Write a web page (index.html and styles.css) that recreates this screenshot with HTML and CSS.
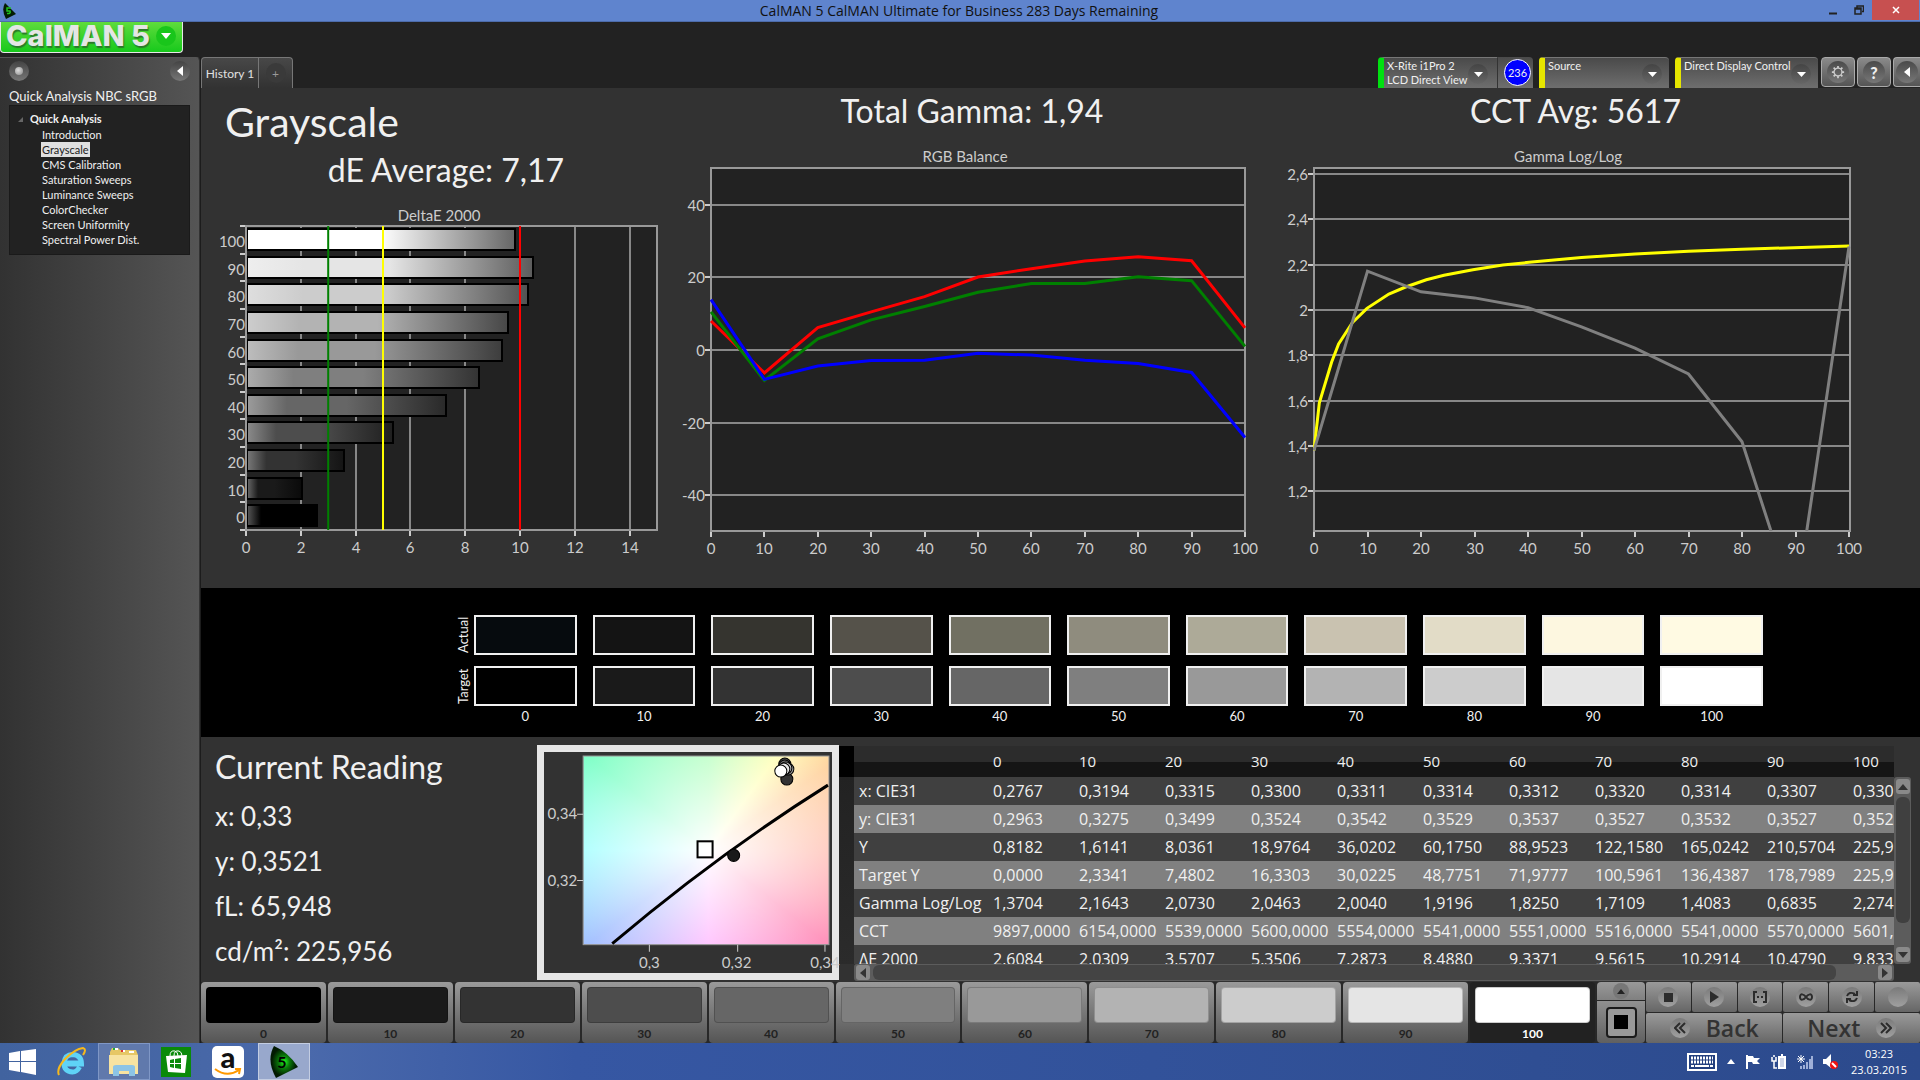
FILE: index.html
```html
<!DOCTYPE html>
<html lang="en">
<head>
  <meta charset="UTF-8" />
  <meta name="viewport" content="width=device-width, initial-scale=1.0" />
  <title>CalMAN 5 CalMAN Ultimate for Business 283 Days Remaining</title>
  <link rel="stylesheet" href="styles.css">
</head>
<body>
  <!-- Window title bar -->
  <header class="titlebar">
    <svg class="app-icon" viewBox="0 0 14 16"><path d="M3 0 L14 11 L4 16 Q-1 7 3 0Z" fill="#041c04"/><path d="M9 5H5v3h3q1 3-3 2.500" fill="none" stroke="#1fc41f" stroke-width="1.500"/></svg>
    <span class="titlebar-text">CalMAN 5 CalMAN Ultimate for Business 283 Days Remaining</span>
    <div class="window-buttons">
      <button aria-label="Minimize"><svg width="10" height="10"><path d="M1 8.500H9" stroke="#222" stroke-width="2"/></svg></button>
      <button aria-label="Restore"><svg width="10" height="10"><path d="M3 3V1H9.500V6.500H8M1 3H7V9H1ZM1 4H7" fill="none" stroke="#222" stroke-width="1.500"/></svg></button>
      <button class="close" aria-label="Close"><svg width="8" height="8"><path d="M1 1L7 7M7 1L1 7" stroke="#fff" stroke-width="1.500"/></svg></button>
    </div>
  </header>

  <!-- Application menu -->
  <div class="app-header">
    <button class="logo" aria-label="CalMAN 5 menu">
      <span class="logo-text">CalMAN 5</span>
      <span class="logo-arrow"><svg width="10" height="6"><path d="M0 0H10L5 6Z" fill="#fff"/></svg></span>
    </button>
  </div>

  <div class="app-body">
    <!-- Workflow tree -->
    <aside class="sidebar">
      <div class="sidebar-tools">
        <button class="round" aria-label="Pin"><span class="bead"></span></button>
        <button class="round" aria-label="Collapse"><svg width="6" height="10"><path d="M6 0V10L0 5Z" fill="#fff"/></svg></button>
      </div>
      <h3>Quick Analysis NBC sRGB</h3>
      <nav class="tree">
        <div class="tree-root"><svg width="5" height="5"><path d="M5 0V5H0Z" fill="#666"/></svg>Quick Analysis</div>
        <ul>
          <li><a href="#">Introduction</a></li>
          <li><a href="#" class="active">Grayscale</a></li>
          <li><a href="#">CMS Calibration</a></li>
          <li><a href="#">Saturation Sweeps</a></li>
          <li><a href="#">Luminance Sweeps</a></li>
          <li><a href="#">ColorChecker</a></li>
          <li><a href="#">Screen Uniformity</a></li>
          <li><a href="#">Spectral Power Dist.</a></li>
        </ul>
      </nav>
    </aside>

    <main class="main">
      <!-- Tabs and devices -->
      <div class="topbar">
        <div class="tabs">
          <button class="tab">History 1</button>
          <button class="tab add" aria-label="Add history"><span class="round">+</span></button>
        </div>
        <div class="devices">
          <button class="device meter">
            <span>X-Rite i1Pro 2<br>LCD Direct View</span>
            <span class="round"><svg width="9" height="5"><path d="M0 0H9L4.500 5Z" fill="#fff"/></svg></span>
          </button>
          <button class="badge-box"><span class="badge">236</span></button>
          <button class="device source">
            <span>Source</span>
            <span class="round"><svg width="9" height="5"><path d="M0 0H9L4.500 5Z" fill="#fff"/></svg></span>
          </button>
          <button class="device display">
            <span>Direct Display Control</span>
            <span class="round"><svg width="9" height="5"><path d="M0 0H9L4.500 5Z" fill="#fff"/></svg></span>
          </button>
          <button class="tool" aria-label="Settings"><span class="round"><svg width="14" height="14" viewBox="0 0 16 16" fill="none" stroke="#ccc"><circle cx="8" cy="8" r="4.500" stroke-width="1.500"/><path d="M8 1V3.500M8 12.500V15M1 8H3.500M12.500 8H15M3 3L4.800 4.800M11.200 11.200L13 13M3 13L4.800 11.200M11.200 4.800L13 3" stroke-width="2"/></svg></span></button>
          <button class="tool" aria-label="Help"><span class="round help">?</span></button>
          <button class="tool last" aria-label="Hide"><span class="round"><svg width="6" height="10"><path d="M6 0V10L0 5Z" fill="#fff"/></svg></span></button>
        </div>
      </div>

      <!-- Charts -->
      <section class="charts">
        <div class="panel">
          <h1>Grayscale</h1>
          <h2>dE Average: 7,17</h2>
          <svg id="deltaChart" viewBox="0 0 490 360"></svg>
        </div>
        <div class="panel">
          <h2>Total Gamma: 1,94</h2>
          <svg id="rgbChart" viewBox="0 0 562 420"></svg>
        </div>
        <div class="panel">
          <h2>CCT Avg: 5617</h2>
          <svg id="gammaChart" viewBox="0 0 645 420"></svg>
        </div>
      </section>

      <!-- Actual and target swatches -->
      <section class="compare">
        <div class="compare-row"><span class="compare-name">Actual</span><div class="swatches" id="actual"></div></div>
        <div class="compare-row"><span class="compare-name">Target</span><div class="swatches" id="target"></div></div>
        <div class="compare-labels" id="compareLabels"></div>
      </section>

      <section class="results">
        <!-- Current reading -->
        <div class="reading">
          <h2>Current Reading</h2>
          <p>x: 0,33</p>
          <p>y: 0,3521</p>
          <p>fL: 65,948</p>
          <p>cd/m²: 225,956</p>
        </div>

        <!-- CIE diagram -->
        <div class="cie">
          <svg viewBox="0 0 287 223">
            <foreignObject x="39" y="4" width="245" height="188"><div class="cie-colors"></div></foreignObject>
            <rect x="39" y="4" width="245" height="188" fill="none" stroke="#999"/>
            <path d="M68 191Q173 102 283 33" fill="none" stroke="#000" stroke-width="3"/>
            <path d="M33 62H39M33 128H39M105 192V199M193 192V199M280 192V199" stroke="#ccc" stroke-width="1"/>
            <g stroke="#000" stroke-width="1">
              <circle cx="189" cy="103" r="6" fill="#1a1a1a"/>
              <circle cx="242" cy="27" r="6" fill="#333"/>
              <circle cx="240" cy="12" r="6" fill="#4d4d4d"/>
              <circle cx="240" cy="14" r="6" fill="#777"/>
              <circle cx="243" cy="17" r="6" fill="#999"/>
              <circle cx="241" cy="16" r="6" fill="#ccc"/>
              <circle cx="239" cy="17" r="6" fill="#e6e6e6"/>
              <circle cx="236" cy="19" r="6" fill="#fff"/>
            </g>
            <rect x="153" y="89" width="15" height="16" fill="#fff" fill-opacity="0.500" stroke="#000" stroke-width="2"/>
            <g class="axis">
              <text x="33" y="67" text-anchor="end">0,34</text>
              <text x="33" y="134" text-anchor="end">0,32</text>
              <text x="105" y="215" text-anchor="middle">0,3</text>
              <text x="192" y="215" text-anchor="middle">0,32</text>
              <text x="280" y="215" text-anchor="middle">0,34</text>
            </g>
          </svg>
        </div>

        <!-- Readings table -->
        <div class="grid-box">
          <div class="row-heads"></div>
          <div class="table-clip"><table id="readings"></table></div>
          <div class="vscroll">
            <button aria-label="Scroll up"><svg width="10" height="6"><path d="M0 6H10L5 0Z" fill="#333"/></svg></button>
            <div class="thumb"></div>
            <button aria-label="Scroll down"><svg width="10" height="6"><path d="M0 0H10L5 6Z" fill="#333"/></svg></button>
          </div>
          <div class="hscroll">
            <button aria-label="Scroll left"><svg width="6" height="10"><path d="M6 0V10L0 5Z" fill="#333"/></svg></button>
            <div class="thumb"></div>
            <button aria-label="Scroll right"><svg width="6" height="10"><path d="M0 0V10L6 5Z" fill="#333"/></svg></button>
          </div>
        </div>
      </section>

      <!-- Pattern bar and transport controls -->
      <footer class="pattern-bar">
        <div class="patterns" id="patterns"></div>
        <div class="pattern-window">
          <button class="up" aria-label="Show more"><span class="round"><svg width="8" height="5"><path d="M0 5H8L4 0Z" fill="#222"/></svg></span></button>
          <button class="window-size" aria-label="Window size"><span><i></i></span></button>
        </div>
        <div class="transport">
          <button aria-label="Stop"><span class="round"><svg width="9" height="9"><path d="M0 0H9V9H0Z" fill="#2c2c2c"/></svg></span></button>
          <button aria-label="Play"><span class="round"><svg width="10" height="12"><path d="M1 0V12L10 6Z" fill="#2c2c2c"/></svg></span></button>
          <button aria-label="Read series"><span class="round"><svg width="14" height="12" fill="none" stroke="#2c2c2c" stroke-width="2"><path d="M4 1H1V11H4M10 1H13V11H10M4 6H6M8 6H10"/></svg></span></button>
          <button aria-label="Continuous"><span class="round"><svg width="14" height="8" fill="none" stroke="#2c2c2c" stroke-width="2"><path d="M7 4C5 1 1 0 1 4S5 7 7 4S13 0 13 4S9 7 7 4Z"/></svg></span></button>
          <button aria-label="Refresh"><span class="round"><svg width="12" height="12" fill="none" stroke="#2c2c2c" stroke-width="2"><path d="M1 5Q3 0 9 3M11 0V4H7M11 7Q9 12 3 9M1 12V8H5"/></svg></span></button>
          <button aria-label="Blank"><span class="round"></span></button>
          <button class="step"><span class="round"><svg width="12" height="12" fill="none" stroke="#2c2c2c" stroke-width="2"><path d="M6 1L1 6L6 11M11 1L6 6L11 11"/></svg></span>Back</button>
          <button class="step">Next<span class="round"><svg width="12" height="12" fill="none" stroke="#2c2c2c" stroke-width="2"><path d="M1 1L6 6L1 11M6 1L11 6L6 11"/></svg></span></button>
        </div>
      </footer>
    </main>
  </div>

  <!-- Desktop taskbar -->
  <div class="taskbar">
    <div class="launchers">
      <button aria-label="Start"><svg width="28" height="28" viewBox="0 0 28 28"><path d="M0 5L11 3V13H0ZM12 3L27 1V13H12ZM0 14H11V24L0 22ZM12 14H27V27L12 24Z" fill="#fff"/></svg></button>
      <button aria-label="Internet Explorer"><svg width="30" height="30" viewBox="0 0 30 30"><path d="M22.500 20Q20 25 15.500 25Q7 24.500 7 16Q8 7.500 15.500 7.500Q24.500 8 24.500 17H9" fill="none" stroke="#5fd3f7" stroke-width="5"/><path d="M9 15H22" stroke="#5fd3f7" stroke-width="3"/><path d="M2 28Q-1 22 8 12Q18 2 26 1Q30 2 26 8" fill="none" stroke="#f6b91c" stroke-width="2"/></svg></button>
      <button class="open" aria-label="Explorer"><svg width="30" height="30" viewBox="0 0 30 30"><path d="M1 5L3 1H9L11 3H27L29 8V27H1Z" fill="#e6c765"/><path d="M5 2H9M12 4H16M20 5H25" stroke="#fff" stroke-width="2"/><path d="M4 2H6" stroke="#2a3" stroke-width="2"/><path d="M12 4H14" stroke="#d33" stroke-width="2"/><path d="M0 8H29V27H0Z" fill="#f7e3a1"/><path d="M4 29V20Q4 18 7 18H23Q26 18 26 20V29H20V24H10V29Z" fill="#8cc4e6"/></svg></button>
      <button aria-label="Store"><svg width="30" height="30" viewBox="0 0 30 30"><path d="M0 0H30V30H0Z" fill="#0a8a0a"/><path d="M9 9Q9 3 14 4Q17 5 17 9M13 9Q13 3 18 4Q21 5 21 9" fill="none" stroke="#fff"/><path d="M5 9L26 8L24 26L7 25Z" fill="#fff"/><path d="M9 13L13 12V16H9ZM14 12L20 11V16H14ZM9 17H13V21L9 20ZM14 17H20V22L14 21Z" fill="#0a8a0a"/></svg></button>
      <button aria-label="Amazon"><span class="amazon">a<svg width="28" height="8" viewBox="0 0 28 8"><path d="M1 1Q13 10 25 2M21 1H26L25 6" fill="none" stroke="#f90" stroke-width="2"/></svg></span></button>
      <button class="open current" aria-label="CalMAN"><svg width="28" height="32" viewBox="0 0 28 32"><radialGradient id="glow"><stop offset="0" stop-color="#2f2"/><stop offset="0.400" stop-color="#0a7a0a"/><stop offset="0.900" stop-color="#021a02"/></radialGradient><path d="M4 0Q-4 14 6 32L28 21Q18 6 4 0Z" fill="url(#glow)"/><text x="12" y="22" text-anchor="middle" class="five">5</text></svg></button>
    </div>
    <div class="tray">
      <svg width="30" height="18" viewBox="0 0 30 18"><path d="M1 1H29V17H1Z" fill="#24407f" stroke="#fff" stroke-width="2"/><path d="M4 5H26M4 9H26" stroke="#fff" stroke-width="3" stroke-dasharray="2 1"/><path d="M4 13H7M8 13H22M23 13H26" stroke="#fff" stroke-width="2"/></svg>
      <svg width="8" height="5"><path d="M0 5H8L4 0Z" fill="#fff"/></svg>
      <svg width="16" height="16"><path d="M2 1V15" stroke="#fff" stroke-width="2"/><path d="M3 2H8L9 4H15L12 7L15 10H8L7 8H3Z" fill="#fff"/></svg>
      <svg width="16" height="16" fill="none" stroke="#fff"><path d="M8 3H14V14H8ZM10 1H12" stroke-width="2"/><path d="M9 4H13V13H9Z" fill="#cfd6e8" stroke="none"/><path d="M1 3V7H5V3M3 1V3M3 7V14H6" stroke-width="1.500"/></svg>
      <svg width="16" height="16"><path d="M7 15V11M10 15V8M13 15V5M15 15V2M4 15V12" stroke="#9fb0d8" stroke-width="2"/><path d="M4 1V9M0 5H8M1 2L7 8M7 2L1 8" stroke="#fff"/></svg>
      <svg width="16" height="16"><path d="M0 5H3L8 0V14L3 10H0Z" fill="#fff"/><circle cx="11" cy="11" r="4" fill="#e11"/><path d="M9 9L13 13" stroke="#fff" stroke-width="2"/></svg>
      <div class="clock">03:23<br>23.03.2015</div>
    </div>
  </div>

  <script>
    const levels = [0, 10, 20, 30, 40, 50, 60, 70, 80, 90, 100];
    const deltaE = [2.6084, 2.0309, 3.5707, 5.3506, 7.2873, 8.4880, 9.3371, 9.5615, 10.2914, 10.4790, 9.833];
    const actualColors = ["#060b0e", "#141414", "#35342f", "#55524a", "#717062", "#8f8c7e", "#adaa98", "#c9c2b0", "#e2dcc7", "#fdf7e0", "#fffae3"];

    const rgb = {
      red: [8, -6.3, 6.2, 10.5, 14.7, 20.1, 22.4, 24.5, 25.7, 24.6, 6.1],
      green: [10.5, -8.4, 3.1, 8.3, 12, 15.9, 18.3, 18.3, 20.2, 19.1, 1],
      blue: [13.9, -8.1, -4.4, -2.9, -2.8, -0.9, -1.4, -2.8, -3.7, -6.2, -24.1]
    };
    const gammaMeasured = [1.38, 2.171, 2.08, 2.053, 2.01, 1.925, 1.831, 1.717, 1.418, 0.69, 2.28];
    const gammaTarget = [[0, 1.38], [1, 1.59], [3.3, 1.77], [4.6, 1.85], [7.2, 1.945], [9.9, 2.007], [14, 2.07], [17, 2.1], [21, 2.133],
      [24.3, 2.153], [29.7, 2.177], [35.3, 2.198], [40.2, 2.21], [50, 2.231], [60, 2.247], [70, 2.259], [80, 2.268], [100, 2.282]];

    const rows = [
      ["x: CIE31", "0,2767", "0,3194", "0,3315", "0,3300", "0,3311", "0,3314", "0,3312", "0,3320", "0,3314", "0,3307", "0,3300"],
      ["y: CIE31", "0,2963", "0,3275", "0,3499", "0,3524", "0,3542", "0,3529", "0,3537", "0,3527", "0,3532", "0,3527", "0,3521"],
      ["Y", "0,8182", "1,6141", "8,0361", "18,9764", "36,0202", "60,1750", "88,9523", "122,1580", "165,0242", "210,5704", "225,9560"],
      ["Target Y", "0,0000", "2,3341", "7,4802", "16,3303", "30,0225", "48,7751", "71,9777", "100,5961", "136,4387", "178,7989", "225,9560"],
      ["Gamma Log/Log", "1,3704", "2,1643", "2,0730", "2,0463", "2,0040", "1,9196", "1,8250", "1,7109", "1,4083", "0,6835", "2,2740"],
      ["CCT", "9897,0000", "6154,0000", "5539,0000", "5600,0000", "5554,0000", "5541,0000", "5551,0000", "5516,0000", "5541,0000", "5570,0000", "5601,0000"],
      ["ΔE 2000", "2,6084", "2,0309", "3,5707", "5,3506", "7,2873", "8,4880", "9,3371", "9,5615", "10,2914", "10,4790", "9,8330"]
    ];

    function gray(value) {
      const v = Math.max(0, Math.min(255, Math.round(value)));
      return `rgb(${v},${v},${v})`;
    }
    function line(x1, y1, x2, y2, cls) {
      return `<line x1="${x1}" y1="${y1}" x2="${x2}" y2="${y2}" class="${cls}"/>`;
    }
    function text(x, y, str, anchor) {
      return `<text x="${x}" y="${y}" text-anchor="${anchor}">${str}</text>`;
    }
    function polyline(points, cls) {
      return `<polyline points="${points.map(p => p.join(",")).join(" ")}" class="series ${cls}"/>`;
    }

    // Horizontal bars, one for each gray level
    function drawDelta() {
      const left = 45, right = 456, top = 23, bottom = 327;
      const unit = (right - left) / 15, step = (bottom - top) / 11;
      let out = `<rect x="${left}" y="${top}" width="${right - left}" height="${bottom - top}" class="plot"/>`;
      for (let v = 0; v <= 14; v += 2) {
        const x = Math.round(left + v * unit);
        out += line(x, top, x, bottom, "gridline") + line(x, bottom, x, bottom + 6, "tick") + text(x, 350, v, "middle");
      }
      let defs = "";
      levels.slice().reverse().forEach((level, i) => {
        const y = Math.round(top + i * step), base = level * 2.55;
        const k = level / 10;
        defs += `<linearGradient id="bar${level}"><stop offset="0" stop-color="${gray(base + (255 - base) * 0.35)}"/><stop offset="0.2" stop-color="${gray(base)}"/>
          <stop offset="0.5" stop-color="${gray(base)}"/><stop offset="1" stop-color="${gray(base * 0.4)}"/></linearGradient>`;
        out += `<rect x="${left + 1}" y="${y + 3}" width="${Math.round(deltaE[k] * unit) - 1}" height="21" fill="url(#bar${level})" class="bar"/>`;
        out += line(left - 6, y, left, y, "tick") + text(left - 1, y + 21, level, "end");
      });
      out += line(left - 6, bottom, left, bottom, "tick");
      out += `<rect x="${left}" y="${top}" width="${right - left}" height="${bottom - top}" class="frame"/>`;
      out += line(left + 3 * unit, top, left + 3 * unit, bottom, "limit green");
      out += line(left + 5 * unit, top, left + 5 * unit, bottom, "limit yellow");
      out += line(left + 10 * unit, top, left + 10 * unit, bottom, "limit red");
      out += text(238, 18, "DeltaE 2000", "middle");
      document.getElementById("deltaChart").innerHTML = `<defs>${defs}</defs>${out}`;
    }

    // Shared frame of the two line charts
    function drawAxes(left, right, span, ticks, scaleY) {
      let out = `<rect x="${left}" y="24" width="${right - left}" height="363" class="plot"/>`;
      ticks.forEach(v => {
        const y = Math.round(scaleY(v));
        out += line(left - 6, y, left, y, "tick") + line(left, y, right, y, "gridline");
        out += text(left - 6, y + 6, String(v).replace(".", ","), "end");
      });
      levels.forEach(v => {
        const x = Math.round(left + v * span / 100);
        out += line(x, 387, x, 393, "tick") + text(x, 410, v, "middle");
      });
      return out + `<rect x="${left}" y="24" width="${right - left}" height="363" class="frame"/>`;
    }

    function drawRgb() {
      const y = v => 206 - v * 3.63;
      let out = drawAxes(20, 554, 534, [40, 20, 0, -20, -40], y);
      for (const name in rgb) {
        out += polyline(rgb[name].map((v, i) => [20 + i * 53.4, y(v)]), name);
      }
      out += text(274, 18, "RGB Balance", "middle");
      document.getElementById("rgbChart").innerHTML = out;
    }

    function drawGamma() {
      const y = v => 30 + (2.6 - v) * 226.5;
      let out = `<clipPath id="gammaClip"><rect x="60" y="24" width="538" height="363"/></clipPath>`;
      out += drawAxes(61, 597, 535, [2.6, 2.4, 2.2, 2, 1.8, 1.6, 1.4, 1.2], y);
      out += `<g clip-path="url(#gammaClip)">`;
      out += polyline(gammaTarget.map(p => [61 + p[0] * 5.35, y(p[1])]), "yellow");
      out += polyline(gammaMeasured.map((v, i) => [61 + i * 53.5, y(v)]), "gray") + "</g>";
      out += text(315, 18, "Gamma Log/Log", "middle");
      document.getElementById("gammaChart").innerHTML = out;
    }

    // Swatches, table and pattern buttons
    function fillPage() {
      document.getElementById("actual").innerHTML = actualColors.map(c => `<div style="background:${c}"></div>`).join("");
      document.getElementById("target").innerHTML = levels.map(v => `<div style="background:${gray(v * 2.55)}"></div>`).join("");
      document.getElementById("compareLabels").innerHTML = levels.map(v => `<span>${v}</span>`).join("");
      document.getElementById("readings").innerHTML =
        "<thead><tr><th></th>" + levels.map(v => `<th>${v}</th>`).join("") + "</tr></thead><tbody>" +
        rows.map(r => "<tr>" + r.map(c => `<td>${c}</td>`).join("") + "</tr>").join("") + "</tbody>";
      document.getElementById("patterns").innerHTML = levels.map(v =>
        `<button class="pattern${v === 100 ? " selected" : ""}"><span style="background:${gray(v * 2.55)}"></span>${v}</button>`).join("");
    }

    drawDelta();
    drawRgb();
    drawGamma();
    fillPage();
  </script>
</body>
</html>
```
FILE: styles.css
```css
* { box-sizing: border-box; }
body { margin: 0; height: 100vh; display: flex; flex-direction: column; overflow: hidden; background: #222; color: #f0f0f0; font-family: Lato, "Open Sans", sans-serif; font-size: 13px; }
h1, h2, h3, p, ul { margin: 0; padding: 0; font-weight: normal; }
button { font: inherit; color: inherit; border: none; padding: 0; background: none; display: flex; align-items: center; justify-content: center; }
svg { display: block; flex: none; }

/* Title bar */
.titlebar { height: 22px; flex: none; display: flex; align-items: center; background: #5f84ce; color: #111; border-bottom: 1px solid #4d6cab; }
.app-icon { width: 14px; height: 16px; margin-left: 2px; }
.titlebar-text { flex: 1; text-align: center; font-family: "Open Sans", sans-serif; font-size: 14px; line-height: 22px; padding-left: 82px; }
.window-buttons { display: flex; align-self: flex-start; }
.window-buttons button { width: 26px; height: 20px; }
.window-buttons .close { width: 47px; background: #c75050; margin-right: 1px; }

/* Logo menu */
.app-header { flex: none; height: 35px; }
.logo { width: 183px; height: 31px; justify-content: space-between; padding: 0 6px 3px 5px; background: linear-gradient(#5fdc3c, #17c91c); border: 1px solid #e8e8e8; border-top: none; border-radius: 0 0 4px 4px; }
.logo-text { font-family: Inter, sans-serif; font-weight: 800; font-size: 29px; line-height: 28px; color: #e4e6e4; text-shadow: 1px 2px 1px #2a7a2a; }
.logo-arrow { width: 20px; height: 20px; border-radius: 50%; background: #19c61b; display: flex; align-items: center; justify-content: center; }

.app-body { flex: 1; min-height: 0; display: flex; }
.round { width: 20px; height: 20px; flex: none; border-radius: 50%; display: flex; align-items: center; justify-content: center; background: linear-gradient(#444, #777); }

/* Sidebar */
.sidebar { width: 200px; flex: none; padding: 3px 9px; background: linear-gradient(90deg, #323232, #555); border-top: 1px solid #555; border-right: 1px solid #333; border-radius: 0 4px 0 0; }
.sidebar-tools { display: flex; justify-content: space-between; height: 20px; }
.bead { width: 8px; height: 8px; border-radius: 50%; background: radial-gradient(circle at 40% 40%, #ddd, #888); }
.sidebar h3 { font-size: 13px; line-height: 18px; margin: 6px 0 0; white-space: nowrap; }
.tree { background: #222; border: 1px solid #1a1a1a; padding: 5px 0 7px 8px; font-size: 11px; line-height: 15px; }
.tree-root { display: flex; align-items: center; gap: 7px; font-weight: bold; line-height: 16px; }
.tree ul { list-style: none; padding: 0 0 0 23px; }
.tree li { display: flex; }
.tree a { color: #f0f0f0; text-decoration: none; padding: 0 1px; }
.tree .active { background: #e0e0e0; color: #222; }

/* Main column */
.main { flex: 1; min-width: 0; display: flex; flex-direction: column; border-left: 1px solid #1c1c1c; }
.topbar { height: 31px; flex: none; display: flex; justify-content: space-between; }
.tabs { display: flex; }
.tab { width: 58px; border: 1px solid #777; border-bottom: none; border-radius: 4px 0 0 0; background: linear-gradient(#484848, #323232); font-size: 12px; color: #e0e0e0; }
.tab.add { width: 34px; border-left: none; border-radius: 0 4px 0 0; color: #999; }
.tab .round { background: #3a3a3a; }
.devices { display: flex; align-items: flex-start; }
.device { height: 31px; justify-content: space-between; align-items: flex-start; padding: 1px 7px 0 3px; border-left: 6px solid #e6e600; border-top: 1px solid #777; border-radius: 4px 4px 0 0; background: linear-gradient(#4a4a4a, #6e6e6e); font-size: 11px; line-height: 14px; text-align: left; white-space: nowrap; }
.device .round { margin-top: 5px; background: linear-gradient(#444, #666); }
.meter { width: 120px; padding-right: 9px; border-left-color: #00e010; border-radius: 4px 0 0 0; border-right: 1px solid #333; }
.source { width: 130px; margin: 0 6px; }
.display { width: 143px; margin-right: 3px; }
.badge-box { width: 35px; height: 31px; padding-left: 4px; background: linear-gradient(#4a4a4a, #6e6e6e); border-radius: 0 4px 0 0; }
.badge { width: 27px; height: 27px; border-radius: 50%; border: 1px solid #fff; background: #00f; font-size: 11px; line-height: 25px; }
.tool { width: 34px; height: 30px; margin-right: 2px; border: 1px solid #aaa; border-radius: 4px; background: linear-gradient(#8a8a8a, #555); }
.tool .round { width: 22px; height: 22px; background: linear-gradient(#4a4a4a, #777); }
.tool.last { width: 27px; margin-right: 0; border-right: none; border-radius: 4px 0 0 4px; }
.help { font-weight: 900; font-size: 16px; }

/* Charts */
.charts { display: grid; grid-template-columns: 490fr 562fr 645fr; padding: 1px 22px 24px 0; background: #323232; }
.panel svg { width: 100%; overflow: visible; }
h1 { font-size: 41px; line-height: 48px; padding: 9px 0 0 24px; }
h2 { font-size: 32px; line-height: 44px; text-align: center; margin-bottom: 11px; }
h1 + h2 { margin-top: 2px; }
text { font-size: 15px; fill: #ccc; }
.plot { fill: #222; }
.frame { fill: none; stroke: #999; stroke-width: 2; }
.gridline { stroke: #888; stroke-width: 2; }
.tick { stroke: #ccc; stroke-width: 2; }
.bar { stroke: #000; stroke-width: 2; }
.limit { stroke-width: 2; }
.series { fill: none; stroke-width: 3; }
.red { stroke: #f00; }
.green { stroke: #008000; }
.blue { stroke: #00f; }
.yellow { stroke: #ff0; }
.gray { stroke: #808080; }

/* Actual / target comparison */
.compare { flex: none; height: 149px; padding: 27px 157px 0 251px; background: #000; }
.compare-row { display: flex; height: 40px; margin-bottom: 11px; }
.compare-name { width: 22px; flex: none; writing-mode: vertical-rl; transform: rotate(180deg); text-align: center; font-size: 13px; line-height: 22px; }
.swatches, .compare-labels { flex: 1; display: grid; grid-template-columns: repeat(11, 1fr); gap: 16px; }
.swatches div { border: 2px solid #f0f0f0; }
.compare-labels { padding-left: 22px; margin-top: -11px; text-align: center; line-height: 20px; }

/* Results */
.results { flex: 1; min-height: 0; display: flex; align-items: flex-start; background: #323232; padding: 8px 9px 0 0; }
.reading { width: 336px; flex: none; padding-left: 14px; }
.reading h2 { text-align: left; margin-bottom: 5px; }
.reading p { font-size: 26px; line-height: 45px; }
.cie { width: 302px; flex: none; border: 7px solid #e6e6e6; height: 235px; background: #323232; }
.cie svg { width: 100%; overflow: visible; }
.cie-colors { width: 100%; height: 100%; background: radial-gradient(ellipse farthest-corner at 51% 50%, #fff 0%, rgba(255,255,255,0.1) 100%), conic-gradient(from 0deg at 51% 50%, #a8ffb4, #ffffa8 36deg, #ffcc90 55deg, #ffb0a0 90deg, #ff80b0 128deg, #ffa8ff 180deg, #98b8ff 232deg, #88ffff 270deg, #70ffc0 308deg, #a8ffb4 360deg); }

.grid-box { flex: 1; min-width: 0; height: 236px; display: grid; grid-template-columns: 15px 1fr 17px; grid-template-rows: 218px 17px; padding-top: 1px; }
.row-heads { background: linear-gradient(#000 31px, #222 31px, #2b2b2b); }
.table-clip { overflow: hidden; font-family: "Open Sans", sans-serif; font-size: 16px; }
table { width: 1080px; border-collapse: collapse; table-layout: fixed; }
th, td { width: 86px; height: 28px; padding: 0 0 0 5px; text-align: left; font-weight: normal; line-height: 22px; white-space: nowrap; }
th:first-child, td:first-child { width: 134px; }
th { height: 31px; padding-bottom: 2px; font-size: 15px; background: linear-gradient(#2c2c2c 50%, #151515 50%); }
td { background: #404040; }
tr:nth-child(even) td { background: #808080; }
.vscroll, .hscroll { display: flex; align-items: center; justify-content: space-between; background: #5c5c5c; border-radius: 3px; }
.vscroll { flex-direction: column; margin-top: 31px; padding: 2px 0; }
.vscroll button, .hscroll button { width: 14px; height: 15px; border-radius: 3px; background: #8a8a8a; }
.vscroll .thumb { width: 14px; height: 126px; border-radius: 6px; background: #404040; margin: 3px 0 auto; }
.hscroll { grid-column: 2; padding: 0 2px; }
.hscroll .thumb { flex: 1; height: 15px; border-radius: 6px; background: #444; margin: 0 42px 0 3px; }

/* Pattern bar */
.pattern-bar { height: 61px; flex: none; display: flex; background: #282828; }
.patterns { flex: 1; display: grid; grid-template-columns: repeat(11, 1fr); gap: 2px; padding-right: 2px; }
.pattern { flex-direction: column; justify-content: flex-start; padding: 5px 5px 0; border-radius: 4px; background: linear-gradient(#9a9a9a, #555); color: #222; font-size: 12px; line-height: 18px; font-weight: bold; }
.pattern span { width: 100%; height: 36px; margin-bottom: 2px; border-radius: 4px; border: 1px solid rgba(0,0,0,0.2); }
.pattern.selected { background: #222; color: #fff; }
.pattern-window { width: 49px; display: flex; flex-direction: column; gap: 1px; padding-right: 1px; }
.up { height: 18px; border-radius: 4px 4px 0 0; background: linear-gradient(#999, #808080); }
.up .round { width: 16px; height: 16px; background: #777; }
.window-size { flex: 1; border-radius: 0 0 4px 4px; background: linear-gradient(#909090, #606060); }
.window-size span { width: 31px; height: 31px; border: 2px solid #1a1a1a; border-radius: 4px; background: #999; display: flex; align-items: center; justify-content: center; }
.window-size i { width: 14px; height: 14px; background: #000; }
.transport { width: 274px; display: grid; grid-template-columns: repeat(6, 1fr); grid-template-rows: 30px 30px; gap: 1px; }
.transport button { background: linear-gradient(#9a9a9a, #666); border-radius: 2px; }
.transport .round { background: linear-gradient(#7a7a7a, #a0a0a0); }
.transport .step { grid-column: span 3; gap: 16px; font-family: "Open Sans", sans-serif; font-weight: 600; font-size: 23px; line-height: 28px; color: #333; }

/* Taskbar */
.taskbar { height: 37px; flex: none; display: flex; justify-content: space-between; background: linear-gradient(90deg, #41639f, #4a69ab 16%, #3657a3 30%, #32529a 60%, #2c4a8c); }
.launchers { display: flex; }
.launchers button { width: 52px; height: 37px; }
.launchers button:first-child { width: 46px; }
.launchers .open { border: 1px solid #7f97c6; background: #6079ac; }
.launchers .current { border-color: #c3cde2; background: #98a8cc; margin-left: 4px; }
.amazon { width: 32px; height: 32px; border-radius: 5px; background: #fff; color: #111; font-weight: 900; font-size: 29px; line-height: 22px; display: flex; flex-direction: column; align-items: center; }
.five { font-size: 16px; font-weight: bold; fill: #000; }
.tray { display: flex; align-items: center; gap: 10px; padding-right: 11px; }
.clock { width: 60px; text-align: center; font-family: "Open Sans", sans-serif; font-size: 11px; line-height: 16px; color: #fff; }
```
